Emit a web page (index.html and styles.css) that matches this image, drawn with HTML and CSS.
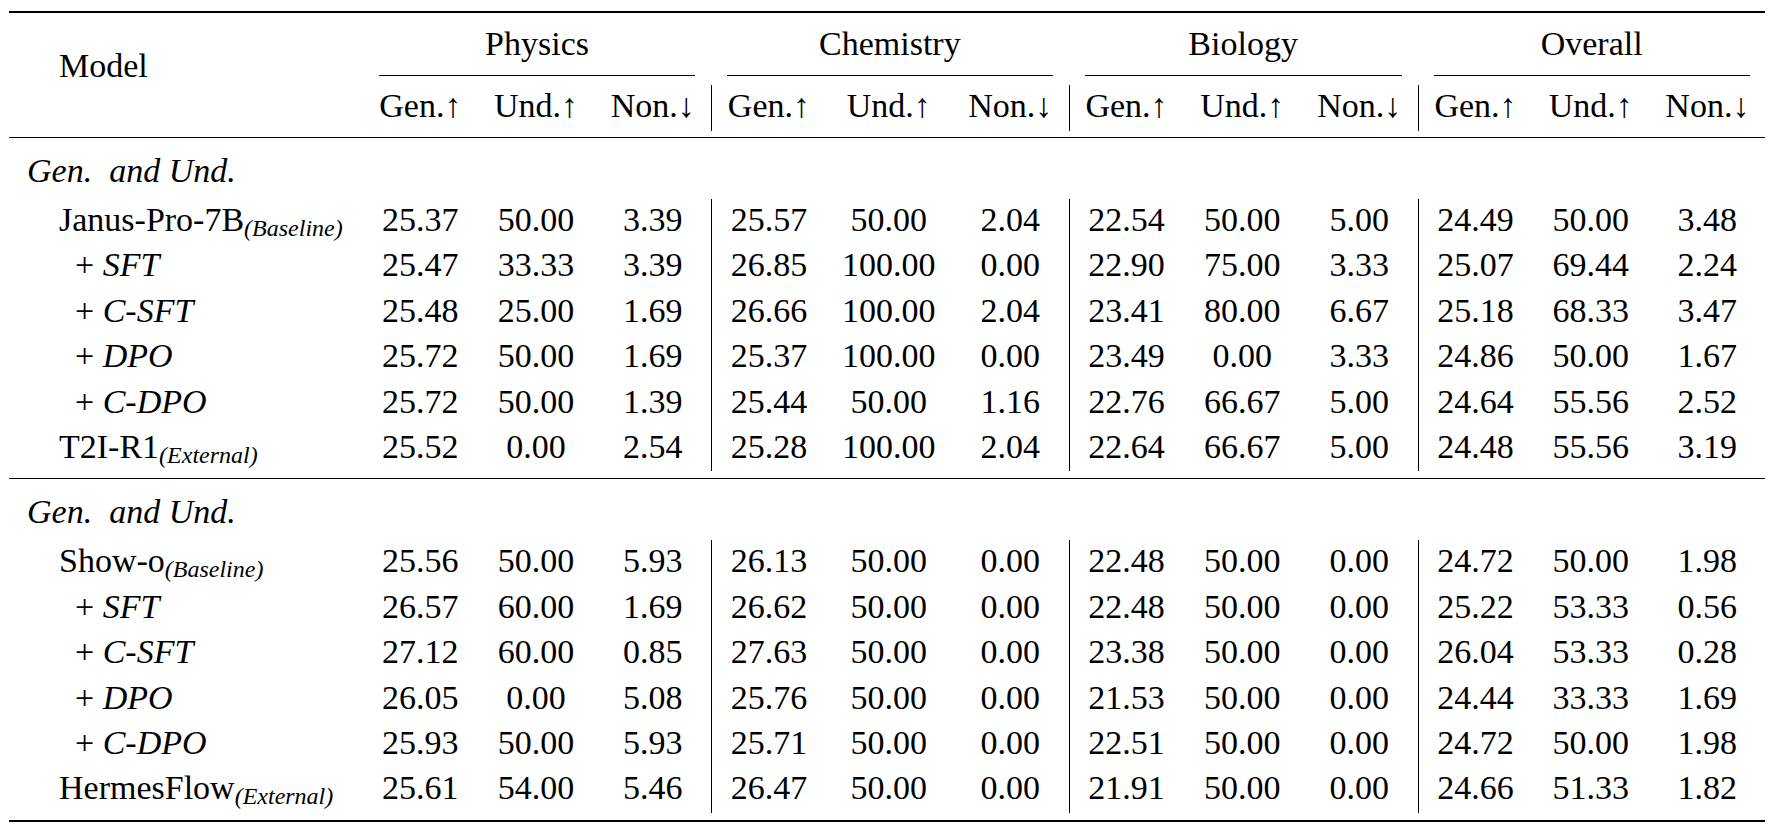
FILE: index.html
```html
<!DOCTYPE html>
<html lang="en">
<head>
<meta charset="utf-8">
<title>Results table</title>
<link rel="stylesheet" href="styles.css">
</head>
<body class="page">
<div class="sheet">
  <div class="head">
    <div class="model">Model</div>
    <div class="grp"><div class="cmid">Physics</div></div>
    <div class="grp"><div class="cmid">Chemistry</div></div>
    <div class="grp"><div class="cmid">Biology</div></div>
    <div class="grp"><div class="cmid">Overall</div></div>
    <div class="hs"><div class="sub">Gen.↑</div></div><div class="hs"><div class="sub">Und.↑</div></div><div class="hs"><div class="sub">Non.↓</div></div>
    <div class="hs"><div class="sub vl">Gen.↑</div></div><div class="hs"><div class="sub">Und.↑</div></div><div class="hs"><div class="sub">Non.↓</div></div>
    <div class="hs"><div class="sub vl">Gen.↑</div></div><div class="hs"><div class="sub">Und.↑</div></div><div class="hs"><div class="sub">Non.↓</div></div>
    <div class="hs"><div class="sub vl">Gen.↑</div></div><div class="hs"><div class="sub">Und.↑</div></div><div class="hs"><div class="sub">Non.↓</div></div>
  </div>

  <div class="sec"><span class="it">Gen.&nbsp; and Und.</span></div>
  <div class="row"><div class="name">Janus-Pro-7B<span class="tag">(Baseline)</span></div><div class="num">25.37</div><div class="num">50.00</div><div class="num">3.39</div><div class="num vl">25.57</div><div class="num">50.00</div><div class="num">2.04</div><div class="num vl">22.54</div><div class="num">50.00</div><div class="num">5.00</div><div class="num vl">24.49</div><div class="num">50.00</div><div class="num">3.48</div></div>
  <div class="row"><div class="name plus">+ <span class="it">SFT</span></div><div class="num">25.47</div><div class="num">33.33</div><div class="num">3.39</div><div class="num vl">26.85</div><div class="num">100.00</div><div class="num">0.00</div><div class="num vl">22.90</div><div class="num">75.00</div><div class="num">3.33</div><div class="num vl">25.07</div><div class="num">69.44</div><div class="num">2.24</div></div>
  <div class="row"><div class="name plus">+ <span class="it">C-SFT</span></div><div class="num">25.48</div><div class="num">25.00</div><div class="num">1.69</div><div class="num vl">26.66</div><div class="num">100.00</div><div class="num">2.04</div><div class="num vl">23.41</div><div class="num">80.00</div><div class="num">6.67</div><div class="num vl">25.18</div><div class="num">68.33</div><div class="num">3.47</div></div>
  <div class="row"><div class="name plus">+ <span class="it">DPO</span></div><div class="num">25.72</div><div class="num">50.00</div><div class="num">1.69</div><div class="num vl">25.37</div><div class="num">100.00</div><div class="num">0.00</div><div class="num vl">23.49</div><div class="num">0.00</div><div class="num">3.33</div><div class="num vl">24.86</div><div class="num">50.00</div><div class="num">1.67</div></div>
  <div class="row"><div class="name plus">+ <span class="it">C-DPO</span></div><div class="num">25.72</div><div class="num">50.00</div><div class="num">1.39</div><div class="num vl">25.44</div><div class="num">50.00</div><div class="num">1.16</div><div class="num vl">22.76</div><div class="num">66.67</div><div class="num">5.00</div><div class="num vl">24.64</div><div class="num">55.56</div><div class="num">2.52</div></div>
  <div class="row"><div class="name">T2I-R1<span class="tag">(External)</span></div><div class="num">25.52</div><div class="num">0.00</div><div class="num">2.54</div><div class="num vl">25.28</div><div class="num">100.00</div><div class="num">2.04</div><div class="num vl">22.64</div><div class="num">66.67</div><div class="num">5.00</div><div class="num vl">24.48</div><div class="num">55.56</div><div class="num">3.19</div></div>

  <div class="sec second"><span class="it">Gen.&nbsp; and Und.</span></div>
  <div class="row"><div class="name">Show-o<span class="tag">(Baseline)</span></div><div class="num">25.56</div><div class="num">50.00</div><div class="num">5.93</div><div class="num vl">26.13</div><div class="num">50.00</div><div class="num">0.00</div><div class="num vl">22.48</div><div class="num">50.00</div><div class="num">0.00</div><div class="num vl">24.72</div><div class="num">50.00</div><div class="num">1.98</div></div>
  <div class="row"><div class="name plus">+ <span class="it">SFT</span></div><div class="num">26.57</div><div class="num">60.00</div><div class="num">1.69</div><div class="num vl">26.62</div><div class="num">50.00</div><div class="num">0.00</div><div class="num vl">22.48</div><div class="num">50.00</div><div class="num">0.00</div><div class="num vl">25.22</div><div class="num">53.33</div><div class="num">0.56</div></div>
  <div class="row"><div class="name plus">+ <span class="it">C-SFT</span></div><div class="num">27.12</div><div class="num">60.00</div><div class="num">0.85</div><div class="num vl">27.63</div><div class="num">50.00</div><div class="num">0.00</div><div class="num vl">23.38</div><div class="num">50.00</div><div class="num">0.00</div><div class="num vl">26.04</div><div class="num">53.33</div><div class="num">0.28</div></div>
  <div class="row"><div class="name plus">+ <span class="it">DPO</span></div><div class="num">26.05</div><div class="num">0.00</div><div class="num">5.08</div><div class="num vl">25.76</div><div class="num">50.00</div><div class="num">0.00</div><div class="num vl">21.53</div><div class="num">50.00</div><div class="num">0.00</div><div class="num vl">24.44</div><div class="num">33.33</div><div class="num">1.69</div></div>
  <div class="row"><div class="name plus">+ <span class="it">C-DPO</span></div><div class="num">25.93</div><div class="num">50.00</div><div class="num">5.93</div><div class="num vl">25.71</div><div class="num">50.00</div><div class="num">0.00</div><div class="num vl">22.51</div><div class="num">50.00</div><div class="num">0.00</div><div class="num vl">24.72</div><div class="num">50.00</div><div class="num">1.98</div></div>
  <div class="row"><div class="name">HermesFlow<span class="tag">(External)</span></div><div class="num">25.61</div><div class="num">54.00</div><div class="num">5.46</div><div class="num vl">26.47</div><div class="num">50.00</div><div class="num">0.00</div><div class="num vl">21.91</div><div class="num">50.00</div><div class="num">0.00</div><div class="num vl">24.66</div><div class="num">51.33</div><div class="num">1.82</div></div>

  <div class="bottomrule"></div>
</div>
</body>
</html>
```

FILE: styles.css
```css
html, body {
  margin: 0;
  padding: 0;
  background: #ffffff;
}

.page {
  font-family: "Liberation Serif", serif;
  color: #000000;
  font-size: 34px;
  line-height: 37px;
}

.sheet {
  --cols: 354px 114.7px 116.7px 116.7px 114.7px 126.2px 116.7px 114.7px 117.7px 116.7px 114.7px 116.7px 116.6px;
  width: 1756px;
  margin: 11px 0 0 9px;
  border-top: 2px solid #000;
  font-family: "Liberation Serif", serif;
  font-size: 34px;
  line-height: 37px;
  white-space: nowrap;
}

.head {
  display: grid;
  grid-template-columns: var(--cols);
  grid-template-rows: 63px 61px;
}

.model {
  grid-column: 1;
  grid-row: 1 / span 2;
  padding: 34px 0 0 50px;
}

.grp {
  grid-column: span 3;
  padding-top: 12px;
  text-align: center;
}

.cmid {
  margin: 0 16px;
  padding-bottom: 13px;
  border-bottom: 1px solid #000;
}

.hs {
  padding: 9px 0 6px;
  text-align: center;
}

.sub {
  height: 44px;
  padding-top: 2px;
}

.sub.vl {
  border-left: 1px solid #000;
}

.sec {
  border-top: 1.5px solid #000;
  padding: 13.5px 0 10.5px 18px;
}

.sec.second {
  margin-top: 7px;
}

.it {
  font-family: "Liberation Serif", serif;
  font-style: italic;
}

.row {
  display: grid;
  grid-template-columns: var(--cols);
  height: 45.4px;
}

.num,
.name {
  padding-top: 2px;
}

.num {
  text-align: center;
}

.num.vl {
  border-left: 1px solid #000;
}

.name {
  padding-left: 50px;
}

.name.plus {
  padding-left: 66px;
}

.tag {
  font-family: "Liberation Serif", serif;
  font-style: italic;
  font-size: 24px;
  line-height: 0;
  vertical-align: -5px;
}

.bottomrule {
  margin-top: 7px;
  height: 2px;
  background: #000;
}
```
